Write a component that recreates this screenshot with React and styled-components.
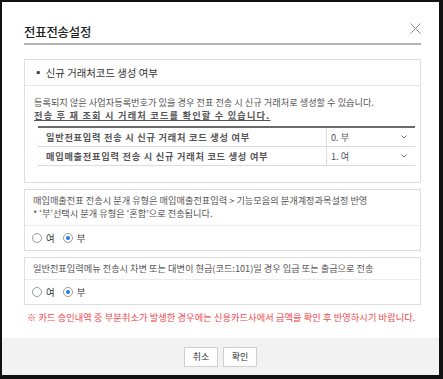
import React from "react";
import styled, { createGlobalStyle } from "styled-components";

const Global = createGlobalStyle`
  html, body { margin: 0; padding: 0; background: #111; }
  body { font-family: "Noto Sans CJK KR", "Noto Sans", sans-serif; }
  * { box-sizing: border-box; }
`;

const Dialog = styled.div`
  margin: 2px 0 0 2px;
  width: 437px;
  height: 373px;
  background: #fff;
  display: flex;
  flex-direction: column;
`;

const Header = styled.div`
  margin: 0 18px 0 22px;
  height: 43px;
  border-bottom: 2px solid #b4b4b4;
  display: flex;
  align-items: center;
  justify-content: space-between;
  padding-top: 24px;
  padding-bottom: 6px;
`;

const Title = styled.h1`
  margin: 0;
  font-size: 12.4px;
  font-weight: 500;
  color: #222;
  letter-spacing: -0.2px;
`;

const Close = styled.button`
  border: 0;
  background: none;
  padding: 0;
  margin-top: -6px;
  width: 11px;
  height: 11px;
  display: flex;
  cursor: pointer;
`;

const Body = styled.div`
  flex: 1;
  padding: 14px 18px 0 22px;
  display: flex;
  flex-direction: column;
  gap: 6px;
`;

const Box = styled.div`
  border: 1px solid #dedede;
`;

const BoxHead = styled.div`
  height: 26px;
  display: flex;
  align-items: center;
  padding-left: 8px;
  font-size: 10.4px;
  color: #333;
  border-bottom: 1px solid #e6e6e6;
`;

const Section1Body = styled.div`
  padding: 10px 5px 16px 9px;
`;

const Text = styled.p`
  margin: 0;
  font-size: 9.2px;
  line-height: 13.4px;
  color: ${(p) => (p.$red ? "#f0484d" : "#555")};
  font-weight: ${(p) => (p.$bold ? 700 : 400)};
  text-decoration: ${(p) => (p.$under ? "underline" : "none")};
  letter-spacing: ${(p) => p.$ls || "0"};
  white-space: nowrap;
`;

const Table = styled.div`
  margin: 3px 0 0 4px;
  border-top: 2px solid #6a6a6a;
`;

const Row = styled.div`
  display: grid;
  grid-template-columns: 1fr 88px;
  height: 19px;
  border-bottom: 1px solid #dcdcdc;
`;

const Label = styled.div`
  display: flex;
  align-items: center;
  padding-left: 8px;
  font-size: 9.2px;
  font-weight: 700;
  color: #555;
  letter-spacing: 0.75px;
  border-right: 1px solid #dcdcdc;
`;

const Select = styled.div`
  display: flex;
  align-items: center;
  justify-content: space-between;
  padding: 0 8px 0 4px;
  font-size: 9.2px;
  color: #555;
`;

const Section2 = styled.div`
  padding: 4px 8px 4px 8px;
  border-bottom: 1px solid #ececec;
`;

const RadioRow = styled.div`
  height: 24px;
  display: flex;
  align-items: center;
  gap: 8px;
  padding-left: 7px;
`;

const RadioLabel = styled.label`
  display: flex;
  align-items: center;
  gap: 4px;
  font-size: 9.4px;
  color: #333;
`;

const Circle = styled.span`
  width: 10px;
  height: 10px;
  border-radius: 50%;
  border: 1px solid #9a9a9a;
  background: #fff;
  display: flex;
  align-items: center;
  justify-content: center;
  &::after {
    content: "";
    width: 4px;
    height: 4px;
    border-radius: 50%;
    background: ${(p) => (p.$on ? "#1e7be6" : "transparent")};
  }
`;

const Note = styled.div`
  padding: 0 0 0 3px;
`;

const Footer = styled.div`
  height: 37px;
  background: #f2f2f2;
  display: flex;
  align-items: center;
  justify-content: center;
  gap: 5px;
`;

const Btn = styled.button`
  width: 34px;
  height: 20px;
  border: 1px solid #cfcfcf;
  background: #fff;
  font-family: inherit;
  font-size: 9px;
  color: #333;
  padding: 0;
`;

const Chevron = () => (
  <svg width="6" height="4" viewBox="0 0 6 4">
    <path d="M0.5 0.5 L3 3 L5.5 0.5" fill="none" stroke="#777" strokeWidth="1" />
  </svg>
);

const Radio = ({ on, children }) => (
  <RadioLabel>
    <Circle $on={on} />
    {children}
  </RadioLabel>
);

export default function App() {
  return (
    <>
      <Global />
      <Dialog>
        <Header>
          <Title>전표전송설정</Title>
          <Close aria-label="close">
            <svg width="11" height="11" viewBox="0 0 11 11">
              <path d="M0.5 0.5 L10.5 10.5 M10.5 0.5 L0.5 10.5" stroke="#888" strokeWidth="1" />
            </svg>
          </Close>
        </Header>
        <Body>
          <Box>
            <BoxHead>▪ 신규 거래처코드 생성 여부</BoxHead>
            <Section1Body>
              <Text>등록되지 않은 사업자등록번호가 있을 경우 전표 전송 시 신규 거래처로 생성할 수 있습니다.</Text>
              <Text $bold $under $ls="1.2px">전송 후 재 조회 시 거래처 코드를 확인할 수 있습니다.</Text>
              <Table>
                <Row>
                  <Label>일반전표입력 전송 시 신규 거래처 코드 생성 여부</Label>
                  <Select>0. 부<Chevron /></Select>
                </Row>
                <Row>
                  <Label>매입매출전표입력 전송 시 신규 거래처 코드 생성 여부</Label>
                  <Select>1. 여<Chevron /></Select>
                </Row>
              </Table>
            </Section1Body>
          </Box>
          <Box>
            <Section2>
              <Text>매입매출전표 전송시 분개 유형은 매입매출전표입력 &gt; 기능모음의 분개계정과목설정 반영</Text>
              <Text>* ‘부’선택시 분개 유형은 ‘혼합’으로 전송됩니다.</Text>
            </Section2>
            <RadioRow>
              <Radio>여</Radio>
              <Radio on>부</Radio>
            </RadioRow>
          </Box>
          <Box>
            <Section2>
              <Text>일반전표입력메뉴 전송시 차변 또는 대변이 현금(코드:101)일 경우 입금 또는 출금으로 전송</Text>
            </Section2>
            <RadioRow>
              <Radio>여</Radio>
              <Radio on>부</Radio>
            </RadioRow>
          </Box>
          <Note>
            <Text $red $ls="0.1px">※ 카드 승인내역 중 부분취소가 발생한 경우에는 신용카드사에서 금액을 확인 후 반영하시기 바랍니다.</Text>
          </Note>
        </Body>
        <Footer>
          <Btn>취소</Btn>
          <Btn>확인</Btn>
        </Footer>
      </Dialog>
    </>
  );
}
